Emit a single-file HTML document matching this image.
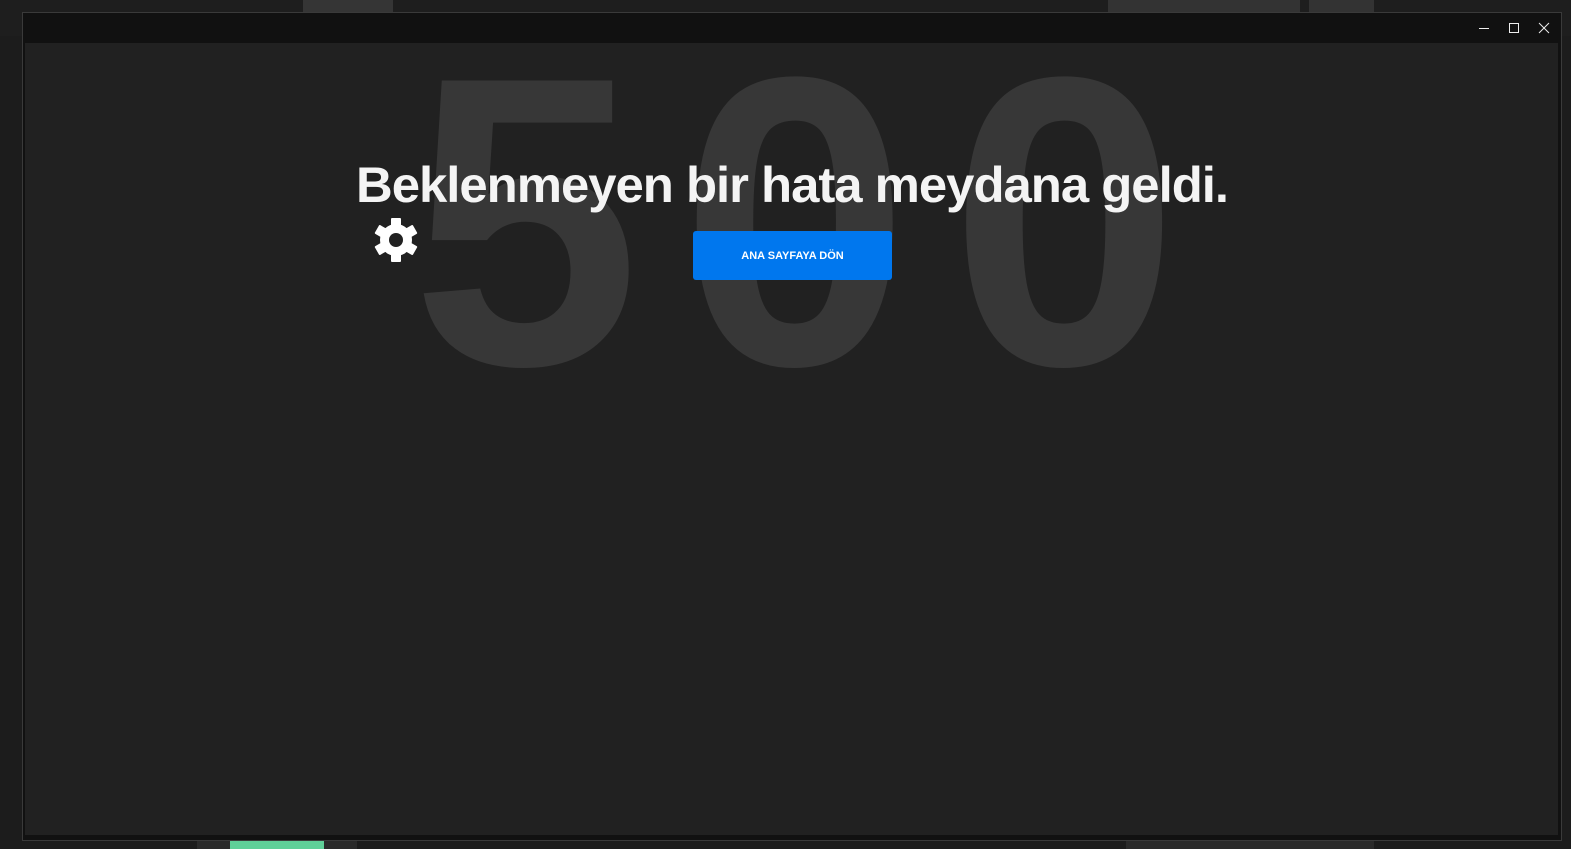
<!DOCTYPE html>
<html><head><meta charset="utf-8"><style>
html,body{margin:0;padding:0;width:1571px;height:849px;overflow:hidden;background:#1c1c1c;font-family:"Liberation Sans",sans-serif}
.abs{position:absolute}
</style></head><body>
<div class="abs" style="left:0;top:0;width:1571px;height:36px;background:#1e1e1e"></div>
<div class="abs" style="left:303px;top:0;width:90px;height:12px;background:#353535"></div>
<div class="abs" style="left:1108px;top:0;width:192px;height:12px;background:#333"></div>
<div class="abs" style="left:1309px;top:0;width:65px;height:12px;background:#333"></div>
<div class="abs" style="left:197px;top:840px;width:160px;height:9px;background:#2a2a2a"></div>
<div class="abs" style="left:230px;top:840px;width:94px;height:9px;background:#5fcf98"></div>
<div class="abs" style="left:1126px;top:840px;width:248px;height:9px;background:#2a2a2a"></div>
<div class="abs" style="left:22px;top:12px;width:1540px;height:829px;background:#111;border:1px solid #3a3a3a;box-sizing:border-box"></div>
<div class="abs" style="left:25px;top:43px;width:1533px;height:792px;background:#212121;overflow:hidden"></div>
<svg class="abs" style="left:0;top:0" width="1571" height="849">
<g stroke="#eee" stroke-width="1" fill="none">
<line x1="1479" y1="28.5" x2="1489" y2="28.5"/>
<rect x="1509.5" y="23.5" width="9" height="9"/>
<line x1="1539" y1="23" x2="1549" y2="33"/><line x1="1549" y1="23" x2="1539" y2="33"/>
</g>
<text x="795" y="364" text-anchor="middle" font-family="Liberation Sans" font-weight="bold" font-size="412" fill="#373737" textLength="768" lengthAdjust="spacing">500</text>
<text x="356" y="202" font-family="Liberation Sans" font-weight="bold" font-size="50" fill="#f4f4f4" textLength="872" lengthAdjust="spacingAndGlyphs" letter-spacing="-1">Beklenmeyen bir hata meydana geldi.</text>
<rect x="693" y="231" width="199" height="49" rx="3" fill="#0077ee"/>
<text x="792.5" y="259" text-anchor="middle" font-family="Liberation Sans" font-weight="bold" font-size="11" fill="#fff">ANA SAYFAYA DÖN</text>
<g transform="translate(396,240)" fill="#fff">
<g id="t"><rect x="-5" y="-22" width="10" height="10" rx="1"/></g>
<use href="#t" transform="rotate(60)"/><use href="#t" transform="rotate(120)"/><use href="#t" transform="rotate(180)"/><use href="#t" transform="rotate(240)"/><use href="#t" transform="rotate(300)"/>
<circle r="16"/>
<circle r="7" fill="#212121"/>
</g>
</svg>
</body></html>
